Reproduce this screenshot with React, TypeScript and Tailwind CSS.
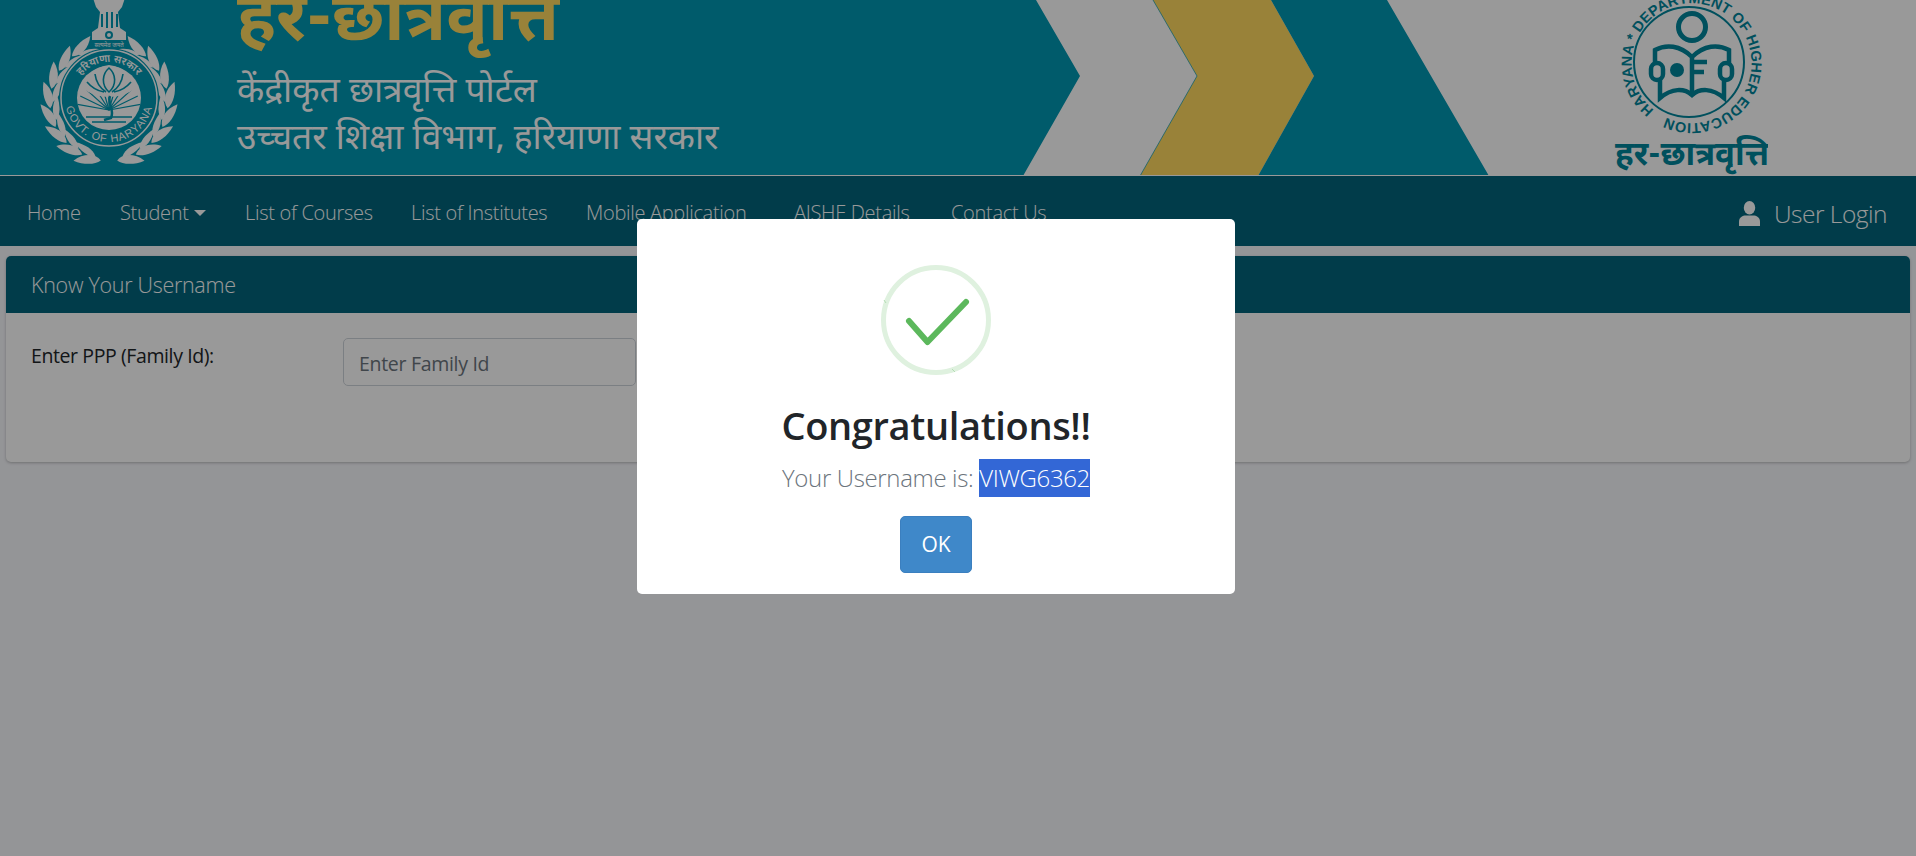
// Know Your Username page with success dialog on top
const sans = "font-['Open_Sans','Noto_Sans',sans-serif]";

const navItems = [
  { label: 'Home', width: 'w-[133px]' },
  { label: 'Student', width: 'w-[125px]' },
  { label: 'List of Courses', width: 'w-[166px]' },
  { label: 'List of Institutes', width: 'w-[175px]' },
  { label: 'Mobile Application', width: 'w-[208px]' },
  { label: 'AISHE Details', width: 'w-[157px]' },
  { label: 'Contact Us', width: 'w-[140px]' },
];

// Wreath leaves around the state emblem, angle in degrees from the bottom
const leafAngles = [8, 27, 46, 65, 84, 103, 122, 141];
const outerLeaf = 'M0 0C6-6 18-5 27 4 16 7 5 5 0 0z';
const innerLeaf = 'M0 0C5 2 16 0 23-9 12-9 4-6 0 0z';

function HaryanaEmblem() {
  return (
    <svg width="140" height="172" viewBox="0 0 140 172" className="shrink-0">
      <defs>
        <path id="govtArc" d="M 25 100 A 44 44 0 0 0 113 100" fill="none" />
        <path id="hindiArc" d="M 33 100 A 36 36 0 0 1 105 100" fill="none" />
      </defs>
      {/* lion capital */}
      <path d="M53 0H85L82 9 78 14 80 30 86 34V42H52V34L58 30 60 14 56 9z" fill="#fff" />
      <path d="M62 16v13M67 14v16M72 14v16M77 16v13" stroke="#0098b2" strokeWidth="2" />
      <path d="M52 42H86L94 50H44z" fill="#0098b2" />
      <circle cx="69" cy="37" r="4" fill="#0098b2" />
      <circle cx="69" cy="37" r="2" fill="#fff" />
      {/* wreath */}
      {leafAngles.map((a) => (
        <g key={a}>
          <path transform={`rotate(${a} 69 104) translate(69 163) scale(-1 1)`} d={outerLeaf} fill="#fff" />
          <path transform={`rotate(${-a} 69 104) translate(69 163)`} d={outerLeaf} fill="#fff" />
          <path transform={`rotate(${a + 6} 69 104) translate(69 160) scale(-1 1)`} d={innerLeaf} fill="#fff" />
          <path transform={`rotate(${-a - 6} 69 104) translate(69 160)`} d={innerLeaf} fill="#fff" />
        </g>
      ))}
      <circle cx="69" cy="100" r="50" fill="#0098b2" />
      <circle cx="69" cy="100" r="48" fill="none" stroke="#fff" strokeWidth="1.5" />
      <text x="69" y="49" textAnchor="middle" fontFamily="Noto Sans Devanagari, Noto Sans, sans-serif" fontSize="6" fill="#fff">सत्यमेव जयते</text>
      <text fontFamily="Liberation Sans, sans-serif" fontSize="11" fill="#fff" letterSpacing="0.8">
        <textPath href="#govtArc" startOffset="50%" textAnchor="middle">GOVT. OF HARYANA</textPath>
      </text>
      <text fontFamily="Noto Sans Devanagari, Noto Sans, sans-serif" fontSize="10.5" fontWeight="600" fill="#fff">
        <textPath href="#hindiArc" startOffset="50%" textAnchor="middle">हरियाणा सरकार</textPath>
      </text>
      {/* sun and lotus */}
      <circle cx="69" cy="100" r="32" fill="#fff" />
      {[-80, -64, -48, -32, -16, 0, 16, 32, 48, 64, 80].map((r) => (
        <path key={r} transform={`rotate(${r} 69 112)`} d="M69 112V80" stroke="#0098b2" strokeWidth="1.2" />
      ))}
      <path d="M42 90c3-13 13-21 27-23 14 2 24 10 27 23-8 6-18 9-27 9s-19-3-27-9z" fill="#fff" />
      <path d="M69 70c7 6 8 17 0 24-8-7-7-18 0-24zM55 76c1 8 5 14 11 18M83 76c-1 8-5 14-11 18M47 84c5 6 11 9 17 10M91 84c-5 6-11 9-17 10" stroke="#0098b2" strokeWidth="1.6" fill="none" />
      <path d="M70 98c-3 8 5 13 1 22l-7 2" stroke="#0098b2" strokeWidth="2.5" fill="none" />
      <path d="M46 119h46M52 124h34" stroke="#0098b2" strokeWidth="1.4" />
    </svg>
  );
}

function DepartmentLogo() {
  return (
    <svg width="164" height="176" viewBox="0 0 164 176" className="shrink-0">
      <defs>
        <path id="ringArc" d="M50 110A60 60 0 1 1 60 116.5" fill="none" />
      </defs>
      <g fill="none" stroke="#00859c">
        <circle cx="85" cy="62" r="55" strokeWidth="2" />
        <circle cx="88" cy="27" r="13.5" strokeWidth="5" />
        <path d="M88 96V57C76 45 62 44 51 50V63M88 57C100 45 114 44 125 50V63" strokeWidth="4.5" />
        <path d="M56 80V98C68 88 80 88 88 95 96 88 108 88 120 98V80" strokeWidth="4.5" />
        <rect x="47" y="63" width="12" height="17" rx="6" strokeWidth="4.5" />
        <rect x="116" y="63" width="12" height="17" rx="6" strokeWidth="4.5" />
        <path d="M88 62H103M88 72H100" strokeWidth="4.5" />
      </g>
      <circle cx="73" cy="70" r="7" fill="#00859c" />
      <text fontFamily="Liberation Sans, sans-serif" fontSize="14.5" fontWeight="700" fill="#00859c">
        <textPath href="#ringArc" textLength="362" lengthAdjust="spacing">HARYANA * DEPARTMENT OF HIGHER EDUCATION</textPath>
      </text>
      <text x="88" y="165" textAnchor="middle" fontFamily="Noto Sans Devanagari, Noto Sans, sans-serif" fontSize="33" fontWeight="700" fill="#00859c">हर-छात्रवृत्ति</text>
    </svg>
  );
}

function SuccessDialog() {
  return (
    <div className="fixed inset-0 z-10 bg-black/40 pr-[44px] pt-[219px] flex justify-center items-start">
      <div className={`w-[598px] h-[375px] rounded-[5px] bg-white flex flex-col items-center pt-[46px] ${sans}`}>
        <div className="relative w-[110px] h-[110px] rounded-full border-[5px] border-[#dff1df]">
          <svg viewBox="0 0 110 110" className="absolute -left-[5px] -top-[5px] w-[110px] h-[110px]">
            <path d="M3 35 5 38M71 104 74 107" stroke="#b5ddb5" strokeWidth="1" />
            <path d="M28 56 46.5 77 85 37" fill="none" stroke="#5cb85c" strokeWidth="6" strokeLinecap="round" strokeLinejoin="round" />
          </svg>
        </div>
        <h2 className="mt-[25px] text-[38px] leading-[50px] font-semibold tracking-[-0.35px] text-[#212529]">Congratulations!!</h2>
        <p className="mt-[9px] h-[38px] flex items-center text-[24px] font-light text-[#6c757d] tracking-[-0.35px] whitespace-pre">
          Your Username is: <span className="h-[38px] leading-[38px] bg-[#3367d6] text-white">VIWG6362</span>
        </p>
        <button className="mt-[19px] w-[72px] h-[57px] rounded-[5px] bg-[#3f88c9] border border-[#3b7fbf] text-white text-[21px]">OK</button>
      </div>
    </div>
  );
}

export default function App() {
  return (
    <div className={`min-h-[856px] bg-[#f7f8fc] ${sans}`}>
      <header className="relative h-[176px] overflow-hidden bg-[#0098b2] border-b border-white flex">
        <svg className="absolute inset-0 w-full h-[176px]" viewBox="0 0 1916 176">
          <path d="M1036 0H1916V176H1023L1080 76z" fill="#fff" />
          <path d="M1153 0H1271L1314 76 1258 176H1140L1197 76z" fill="#ffd960" />
          <path d="M1153 0 1197 76 1140 176" fill="none" stroke="#0098b2" strokeWidth="0.7" />
          <path d="M1271 0H1387L1489 176H1258L1314 76z" fill="#0098b2" />
        </svg>
        <div className="relative pl-[40px] -mt-[2px]">
          <HaryanaEmblem />
        </div>
        <div className="relative ml-[57px] -mt-[19px] font-['Noto_Sans_Devanagari','Noto_Sans',sans-serif]">
          <div className="text-[69px] leading-[84px] font-bold text-[#ffd960]">हर-छात्रवृत्ति</div>
          <div className="mt-[5px] text-[35.5px] leading-[46px] text-white">केंद्रीकृत छात्रवृत्ति पोर्टल</div>
          <div className="mt-[1px] text-[35.3px] leading-[46px] text-white">उच्चतर शिक्षा विभाग, हरियाणा सरकार</div>
        </div>
        <div className="relative ml-auto mr-[148px]">
          <DepartmentLogo />
        </div>
      </header>

      <nav className="h-[70px] bg-[#03657c] flex items-center text-white pl-[27px] pr-[29px]">
        {navItems.slice(0, 1).map((item) => (
          <a key={item.label} className="w-[93px] pt-[3px] text-[20px] font-light tracking-[-0.3px] whitespace-nowrap">{item.label}</a>
        ))}
        {navItems.slice(1).map((item) => (
          <a key={item.label} className={`${item.width} pt-[3px] text-[20px] font-light tracking-[-0.3px] whitespace-nowrap flex items-center`}>
            {item.label}
            {item.label === 'Student' && <span className="ml-[5px] border-x-[6px] border-t-[6px] border-x-transparent border-t-white" />}
          </a>
        ))}
        <a className="ml-auto pt-[7px] flex items-center gap-[14px] text-[24.5px] font-light tracking-[-0.5px]">
          <svg width="21" height="25" viewBox="0 0 22 26" fill="#fff" className="-mt-[2px]">
            <ellipse cx="11" cy="7" rx="6" ry="7" />
            <path d="M0 26v-5c0-4 4-6 7-6h8c3 0 7 2 7 6v5z" />
          </svg>
          User Login
        </a>
      </nav>

      <main className="pt-[10px] px-[6px]">
        <section className="h-[206px] rounded-[5px] bg-white shadow-[0_1px_3px_rgba(0,0,0,0.25)] overflow-hidden">
          <div className="h-[57px] pt-[1px] bg-[#03657c] text-white text-[21.5px] font-light tracking-[-0.3px] pl-[25px] flex items-center">Know Your Username</div>
          <div className="flex items-start pt-[25px] pl-[25px]">
            <label className="w-[312px] mt-[3px] text-[19.5px] tracking-[-0.4px] text-[#212529]">Enter PPP (Family Id):</label>
            <input placeholder="Enter Family Id" className="w-[293px] h-[48px] px-[15px] pt-[2px] rounded-[5px] border border-[#ced4da] bg-white text-[19.5px] tracking-[-0.3px] placeholder:text-[#6c757d]" />
          </div>
        </section>
      </main>

      <SuccessDialog />
    </div>
  );
}
